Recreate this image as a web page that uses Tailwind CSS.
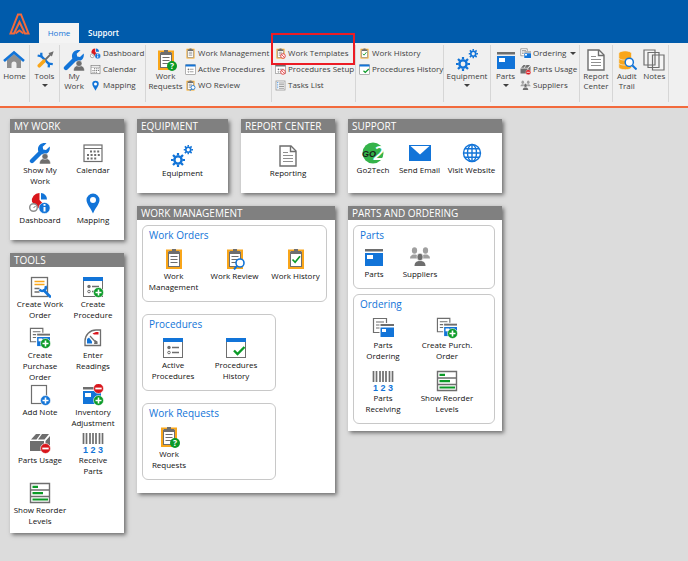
<!DOCTYPE html>
<html lang="en">

<head>
  <meta charset="UTF-8" />
  <meta name="viewport" content="width=device-width, initial-scale=1.0" />
  <title>Home</title>
  <script src="https://cdn.jsdelivr.net/npm/@tailwindcss/browser@4"></script>
</head>

<body class="bg-[#dcdcdc] min-h-screen font-['Segoe_UI','Open_Sans',sans-serif] text-[8px] leading-[11px] text-[#101010]">

  <!-- Icon sprite -->
  <svg class="hidden">
    <symbol id="clipboard" viewBox="0 0 22 22">
      <rect x="4" y="2.500" width="14" height="17.500" fill="#fff" stroke="#f9a61a" stroke-width="2" />
      <rect x="5.500" y="4" width="11" height="14.500" fill="#fff" stroke="#6e6e6e" />
      <path d="M6 3h3V1h4v2h3v3H6z" fill="#6e6e6e" />
    </symbol>
    <symbol id="lines" viewBox="0 0 22 22">
      <path d="M7.500 8.500h7M7.500 11.500h7M7.500 14.500h7" stroke="#6e6e6e" stroke-width="1.200" />
    </symbol>
    <symbol id="plus" viewBox="0 0 22 22">
      <circle cx="16.500" cy="16.500" r="5" fill="currentColor" stroke="#fff" stroke-width=".6" />
      <path d="M16.500 13.500v6M13.500 16.500h6" stroke="#fff" stroke-width="1.600" />
    </symbol>
    <symbol id="minus" viewBox="0 0 22 22">
      <circle cx="16.500" cy="16.500" r="5" fill="#d9161c" stroke="#fff" stroke-width=".6" />
      <path d="M13.300 16.500h6.400" stroke="#fff" stroke-width="1.800" />
    </symbol>
    <symbol id="wrench" viewBox="0 0 22 22">
      <path d="M3 19L12 10" stroke="#1274d8" stroke-width="4.400" stroke-linecap="round" />
      <path d="M17.500 1.300l-3.800 3.500.5 2.800 2.800.5 3.700-3.600c.8 3.500-1.200 7.300-5 7.800-4.500.6-7.200-2.200-6.700-6C9.500 2.500 13.500 0 17.500 1.300z" fill="#1274d8" />
    </symbol>
    <symbol id="gear" viewBox="0 0 14 14">
      <circle cx="7" cy="7" r="3.600" fill="none" stroke="#1274d8" stroke-width="2.400" />
      <path d="M7 0v2.600M7 11.400V14M0 7h2.600M11.400 7H14M2 2l1.900 1.900M10.100 10.100L12 12M12 2l-1.900 1.900M2 12l1.900-1.900" stroke="#1274d8" stroke-width="2.200" />
    </symbol>
    <symbol id="window" viewBox="0 0 22 22">
      <rect x="1.500" y="1.500" width="19" height="19" fill="#fff" stroke="#6e6e6e" />
      <path d="M1 1h20v4H1z" fill="#1274d8" />
    </symbol>
    <symbol id="list" viewBox="0 0 22 22">
      <path d="M10 10.500h7M10 15.500h7" stroke="#6e6e6e" stroke-width="1.300" />
      <circle cx="7" cy="10.500" r="1.700" fill="#6e6e6e" />
      <circle cx="7" cy="15.500" r="1.300" fill="#fff" stroke="#6e6e6e" />
    </symbol>
    <symbol id="block" viewBox="0 0 22 22">
      <circle cx="16" cy="16" r="4.600" fill="#fff" stroke="#e23b3b" stroke-width="1.800" />
      <path d="M13 13l6 6" stroke="#e23b3b" stroke-width="1.600" />
    </symbol>

    <symbol id="i-home" viewBox="0 0 22 22">
      <path d="M4 11l7-6 7 6v8h-4.500v-4a2.500 2.500 0 0 0-5 0v4H4z" fill="#8f8f8f" />
      <path d="M1 12L11 3.500l10 8.500" fill="none" stroke="#1274d8" stroke-width="2.600" />
    </symbol>
    <symbol id="i-tools" viewBox="0 0 22 22">
      <path d="M5 5l12 12" stroke="#1274d8" stroke-width="2.800" />
      <path d="M2 5.500l4.500 1L6.500 2M15.500 20l.5-4.500 4.500.5" fill="none" stroke="#1274d8" stroke-width="2.800" />
      <path d="M19 3l-8 8" stroke="#6e6e6e" stroke-width="2.200" />
      <path d="M9.500 12.500L4 18" stroke="#f9a61a" stroke-width="4.500" stroke-linecap="round" />
      <path d="M17 3l3-1-1 3z" fill="#6e6e6e" stroke="#6e6e6e" stroke-width="2" />
    </symbol>
    <symbol id="i-mywork" viewBox="0 0 22 22">
      <use href="#wrench" />
      <path d="M10.500 22c0-4 2-5.500 5.500-5.500s5.500 1.500 5.500 5.500z" fill="#6e6e6e" stroke="#fff" stroke-width=".5" />
      <circle cx="16" cy="14.500" r="3" fill="#6e6e6e" stroke="#fff" stroke-width=".5" />
    </symbol>
    <symbol id="i-dashboard" viewBox="0 0 22 22">
      <path d="M10.500 8V1A7.500 7.500 0 0 0 3 10l7.500 7 5.500-3.500z" fill="#d9161c" />
      <path d="M12 7.500V1a6.500 6.500 0 0 1 6 6.500z" fill="#1274d8" />
      <circle cx="4.500" cy="15.500" r="3.800" fill="#fff" stroke="#8f8f8f" stroke-width="1.500" />
      <path d="M4.500 16l2-2" stroke="#6e6e6e" />
      <circle cx="15.500" cy="16" r="5.600" fill="#1274d8" stroke="#fff" stroke-width=".6" />
      <path d="M15.500 15v4.500M15.500 12v1.800" stroke="#fff" stroke-width="2" />
    </symbol>
    <symbol id="i-calendar" viewBox="0 0 22 22">
      <rect x="2" y="3" width="18" height="16.500" fill="#fff" stroke="#6e6e6e" stroke-width="1.200" />
      <path d="M2 6.500h18" stroke="#6e6e6e" />
      <path d="M8 9.500h10M5 13h13M5 16.500h10" stroke="#6e6e6e" stroke-width="2" stroke-dasharray="2 1.600" />
    </symbol>
    <symbol id="i-pin" viewBox="0 0 22 22">
      <path d="M11 21.500C9 16.500 4.500 12 4.500 8a6.500 6.500 0 0 1 13 0c0 4-4.500 8.500-6.500 13.500z" fill="#1274d8" />
      <circle cx="11" cy="8" r="3" fill="#fff" />
    </symbol>
    <symbol id="i-work" viewBox="0 0 22 22">
      <use href="#clipboard" /><use href="#lines" />
    </symbol>
    <symbol id="i-request" viewBox="0 0 22 22">
      <use href="#clipboard" /><use href="#lines" />
      <circle cx="17" cy="17" r="5" fill="#0a9a26" />
      <text x="17" y="20" font-size="8.500" font-weight="700" fill="#fff" text-anchor="middle">?</text>
    </symbol>
    <symbol id="i-review" viewBox="0 0 22 22">
      <use href="#clipboard" /><use href="#lines" />
      <circle cx="16" cy="15" r="4" fill="#fff" stroke="#1274d8" stroke-width="1.600" />
      <path d="M13.300 17.700L10 21.500" stroke="#1274d8" stroke-width="2" />
    </symbol>
    <symbol id="i-history" viewBox="0 0 22 22">
      <use href="#clipboard" />
      <path d="M7.500 11.500l2.600 2.800 4.900-6" fill="none" stroke="#0a9a26" stroke-width="1.700" />
    </symbol>
    <symbol id="i-template" viewBox="0 0 22 22">
      <use href="#clipboard" /><use href="#lines" /><use href="#block" />
    </symbol>
    <symbol id="i-procedure" viewBox="0 0 22 22">
      <use href="#window" /><use href="#list" />
    </symbol>
    <symbol id="i-prochistory" viewBox="0 0 22 22">
      <use href="#window" />
      <path d="M9 13.500l3.500 3.500 7-7" fill="none" stroke="#0a9a26" stroke-width="2.400" />
    </symbol>
    <symbol id="i-procsetup" viewBox="0 0 22 22">
      <rect x="1.500" y="2.500" width="19" height="17" fill="#fff" stroke="#6e6e6e" />
      <path d="M1 2h20v3H1z" fill="#6e6e6e" />
      <use href="#list" /><use href="#block" />
    </symbol>
    <symbol id="i-newprocedure" viewBox="0 0 22 22">
      <use href="#window" /><use href="#list" /><use href="#plus" class="text-[#0a9a26]" />
    </symbol>
    <symbol id="i-tasks" viewBox="0 0 22 22">
      <rect x="2" y="2" width="18" height="18" fill="#fff" stroke="#8f8f8f" stroke-width="1.500" />
      <path d="M8 6h10M8 9.500h10M8 13h10M8 16.500h10" stroke="#6e6e6e" stroke-width="1.400" />
      <path d="M5.500 4v14" stroke="#1274d8" stroke-width="1.600" stroke-dasharray="2 1.500" />
    </symbol>
    <symbol id="i-gears" viewBox="0 0 22 22">
      <use href="#gear" x="0" y="8" width="14" height="14" />
      <use href="#gear" x="12.500" y="0" width="9.500" height="9.500" />
    </symbol>
    <symbol id="i-parts" viewBox="0 0 22 22">
      <path d="M2 3h18v2.500H2z" fill="#6e6e6e" />
      <path d="M2 7h18v13H2z" fill="#1274d8" />
      <path d="M4 9h6v4H4z" fill="#fff" />
    </symbol>
    <symbol id="i-ordering" viewBox="0 0 22 22">
      <path d="M1.500 1.500h13v14h-13z" fill="#fff" stroke="#6e6e6e" stroke-width="1.200" />
      <path d="M4 5h8M4 8h4M4 11h4" stroke="#6e6e6e" stroke-width="1.200" />
      <path d="M7.500 6H22v15H7.500z" fill="#fff" />
      <path d="M8.500 7H22v2H8.500z" fill="#6e6e6e" />
      <path d="M8.500 10.500H22V20H8.500z" fill="#1274d8" />
      <path d="M10 12h4v3h-4z" fill="#fff" />
    </symbol>
    <symbol id="i-neworder" viewBox="0 0 22 22">
      <use href="#i-ordering" width="21" height="21" /><use href="#plus" class="text-[#0a9a26]" />
    </symbol>
    <symbol id="i-usage" viewBox="0 0 22 22">
      <path d="M1 9h14v10H1zM2 7.500L7 2h4.500L7.500 7.500zM9 7.500L13 2h7l-4.500 5.500zM16.500 9L21 4v9l-4.500 5z" fill="#6e6e6e" />
      <use href="#minus" />
    </symbol>
    <symbol id="i-suppliers" viewBox="0 0 22 22">
      <g fill="#a0a0a0">
        <ellipse cx="5.500" cy="4.500" rx="2.600" ry="3.300" />
        <ellipse cx="16.500" cy="4.500" rx="2.600" ry="3.300" />
        <path d="M1 12.500c0-3 2-4 4.500-4s3.500 1 3.500 4zM13 12.500c0-3 1-4 3.500-4s4.500 1 4.500 4z" />
      </g>
      <g fill="#6e6e6e">
        <path d="M5.500 20c0-4 2.500-5 5.500-5s5.500 1 5.500 5z" />
        <ellipse cx="11" cy="11" rx="3" ry="3.800" stroke="#fff" stroke-width=".6" />
      </g>
    </symbol>
    <symbol id="i-report" viewBox="0 0 22 22">
      <path d="M3 1h11l5 5v15H3z" fill="#fff" stroke="#6e6e6e" stroke-width="1.400" />
      <path d="M13.500 1v5.500H19" fill="none" stroke="#6e6e6e" stroke-width="1.400" />
      <path d="M6 7.500h5M6 10.500h10M6 13.500h10M6 16.500h10" stroke="#8f8f8f" />
    </symbol>
    <symbol id="i-audit" viewBox="0 0 22 22">
      <g fill="#f9a61a" stroke="#f0f0f0" stroke-width=".7">
        <path d="M2 15v4c0 3.500 14 3.500 14 0v-4z" />
        <path d="M2 9.500v4.500c0 3.500 14 3.500 14 0V9.500z" />
        <path d="M2 4v4.500c0 3.500 14 3.500 14 0V4c0-4-14-4-14 0z" />
      </g>
      <circle cx="13.500" cy="13.500" r="4.500" fill="#fff" stroke="#1274d8" stroke-width="1.600" />
      <path d="M17 17l4.500 4.500" stroke="#1274d8" stroke-width="2.200" />
    </symbol>
    <symbol id="i-notes" viewBox="0 0 22 22">
      <g fill="#f4f4f4" stroke="#6e6e6e" stroke-width="1.200">
        <path d="M1 1h11v15H1zM5 3.500h11v15H5zM9.500 6h11.500v15H9.500z" />
      </g>
    </symbol>
    <symbol id="i-neworkorder" viewBox="0 0 22 22">
      <rect x="2.500" y="1.500" width="16" height="19" fill="#fff" stroke="#6e6e6e" stroke-width="1.300" />
      <path d="M5.500 5.500h10M5.500 8.500h10" stroke="#f9a61a" stroke-width="1.500" />
      <path d="M5.500 12.500h5M5.500 16h5" stroke="#6e6e6e" stroke-width="1.300" />
      <path d="M15 14.500l6 6" stroke="#1274d8" stroke-width="2.600" stroke-linecap="round" />
      <path d="M10.500 13.500a3.500 3.500 0 0 0 6-3.500" fill="none" stroke="#1274d8" stroke-width="2.400" />
    </symbol>
    <symbol id="i-readings" viewBox="0 0 22 22">
      <path d="M3 18.500V14A11 11 0 0 1 14 3h4.500v15.500z" fill="#fff" stroke="#6e6e6e" stroke-width="1.300" />
      <path d="M10.500 6.500l3.500-1.500h2.500v2.500H12z" fill="#d9161c" />
      <path d="M5 12l2-1.500 3 4v2H5z" fill="#1274d8" />
      <path d="M8 9l7 7.500" stroke="#6e6e6e" stroke-width="1.200" />
      <path d="M13 13l2.500 1.500v2.500H12z" fill="#6e6e6e" />
    </symbol>
    <symbol id="i-note" viewBox="0 0 22 22">
      <rect x="2.500" y="1.500" width="15" height="18" fill="#fff" stroke="#6e6e6e" stroke-width="1.200" />
      <use href="#plus" class="text-[#1274d8]" />
    </symbol>
    <symbol id="i-inventory" viewBox="0 0 22 22">
      <use href="#i-parts" x="-1" y="0" />
      <use href="#plus" class="text-[#0a9a26]" />
      <use href="#minus" y="-12" />
    </symbol>
    <symbol id="i-barcode" viewBox="0 0 22 22">
      <path d="M1.500 1v11M4.500 1v11M8 1v11M11 1v11M14 1v11M17.500 1v11M20.500 1v11" stroke="#6e6e6e" stroke-width="1.700" />
      <g font-family="Liberation Sans, sans-serif" font-size="9" font-weight="700" fill="#1274d8" text-anchor="middle">
        <text x="3.500" y="21">1</text><text x="11" y="21">2</text><text x="18.500" y="21">3</text>
      </g>
    </symbol>
    <symbol id="i-levels" viewBox="0 0 22 22">
      <path d="M1.500 1.500h19v19h-19zM1.500 8h19M1.500 14.500h19" fill="#fff" stroke="#6e6e6e" stroke-width="1.400" />
      <path d="M3.500 4.800H9M3.500 11.200H14M3.500 17.500h15.500" stroke="#0a9a26" stroke-width="2.200" />
    </symbol>
    <symbol id="i-go2" viewBox="0 0 22 22">
      <circle cx="11" cy="11" r="10.500" fill="#35b34a" />
      <text x="11.500" y="18" font-family="Open Sans, sans-serif" font-size="19" font-weight="600" font-style="italic" fill="#fff">2</text>
      <text x="0" y="14.500" font-family="Liberation Sans, sans-serif" font-size="9" font-weight="700" font-style="italic" fill="#1e1e1e">GO</text>
    </symbol>
    <symbol id="i-mail" viewBox="0 0 22 22">
      <path d="M0 3h22v16H0z" fill="#1274d8" />
      <path d="M1.500 4l9.500 8.500L20.500 4z" fill="#fff" />
    </symbol>
    <symbol id="i-globe" viewBox="0 0 22 22">
      <g fill="none" stroke="#1274d8" stroke-width="1.400">
        <circle cx="11" cy="11" r="8.500" />
        <ellipse cx="11" cy="11" rx="4.500" ry="8.500" />
        <path d="M11 2.500v17M2.500 11h17M4 6.800h14M4 15.200h14" />
      </g>
    </symbol>
  </svg>

  <!-- Title bar with tabs -->
  <header class="bg-[#005bab] h-[43px] flex items-end">
    <svg class="w-[21px] h-[22px] ml-[9px] mb-2" viewBox="0 0 21 22" fill="none" stroke="#f26a3d" stroke-width="2">
      <path d="M5 20.500L10.500 9l5.500 11.500h3.500L12 1.500H9L1.500 20.500z" />
      <path d="M6.500 20.500l4-3 4 3" />
    </svg>
    <nav class="flex ml-[9px] leading-[20px]">
      <a href="#" class="bg-[#f4f4f4] text-[#1274d8] w-10 text-center">Home</a>
      <a href="#" class="text-white font-semibold px-[9px]">Support</a>
    </nav>
  </header>

  <!-- Ribbon -->
  <div class="bg-[#f0f0f0] h-[65px] border-b-2 border-[#f26a3d] pt-[2px] pb-1 flex leading-[10px] text-[#404040] [&>div]:shrink-0 [&>div]:border-r [&>div]:border-[#d6d6d6] [&_button]:whitespace-nowrap">
    <div class="w-[30px] flex justify-center">
      <button class="flex flex-col items-center self-start pt-1"><svg class="size-[22px]"><use href="#i-home" /></svg>Home</button>
    </div>
    <div class="w-[30px] flex justify-center">
      <button class="flex flex-col items-center self-start pt-1"><svg class="size-[22px] p-[2px]"><use href="#i-tools" /></svg>Tools<span class="mt-[3px] border-x-[3px] border-t-[3px] border-x-transparent border-t-[#404040]"></span></button>
    </div>
    <div class="w-[86px] flex">
      <button class="w-7 flex flex-col items-center self-start pt-1"><svg class="size-[22px]"><use href="#i-mywork" /></svg>My<br>Work</button>
      <div class="pl-[2px]">
        <button class="h-4 flex items-center gap-[2px]"><svg class="size-[11px]"><use href="#i-dashboard" /></svg>Dashboard</button>
        <button class="h-4 flex items-center gap-[2px]"><svg class="size-[11px]"><use href="#i-calendar" /></svg>Calendar</button>
        <button class="h-4 flex items-center gap-[2px]"><svg class="size-[11px]"><use href="#i-pin" /></svg>Mapping</button>
      </div>
    </div>
    <div class="w-[126px] flex">
      <button class="w-[39px] flex flex-col items-center self-start pt-1"><svg class="size-[22px]"><use href="#i-request" /></svg>Work<br>Requests</button>
      <div>
        <button class="h-4 flex items-center gap-[2px]"><svg class="size-[11px]"><use href="#i-work" /></svg>Work Management</button>
        <button class="h-4 flex items-center gap-[2px]"><svg class="size-[11px]"><use href="#i-procedure" /></svg>Active Procedures</button>
        <button class="h-4 flex items-center gap-[2px]"><svg class="size-[11px]"><use href="#i-review" /></svg>WO Review</button>
      </div>
    </div>
    <div class="w-[84px] pl-[3px]">
      <button class="relative h-4 flex items-center gap-[2px]"><svg class="size-[11px]"><use href="#i-template" /></svg>Work Templates
        <!-- callout round the templates button -->
        <span class="absolute -left-1 -top-[12px] w-[84px] h-[32px] border-2 border-[#ec1c24]"></span>
      </button>
      <button class="h-4 flex items-center gap-[2px]"><svg class="size-[11px]"><use href="#i-procsetup" /></svg>Procedures Setup</button>
      <button class="h-4 flex items-center gap-[2px]"><svg class="size-[11px]"><use href="#i-tasks" /></svg>Tasks List</button>
    </div>
    <div class="w-[88px] pl-[3px]">
      <button class="h-4 flex items-center gap-[2px]"><svg class="size-[11px]"><use href="#i-history" /></svg>Work History</button>
      <button class="h-4 flex items-center gap-[2px]"><svg class="size-[11px]"><use href="#i-prochistory" /></svg>Procedures History</button>
    </div>
    <div class="w-[47px] flex justify-center">
      <button class="flex flex-col items-center self-start pt-1"><svg class="size-[22px]"><use href="#i-gears" /></svg>Equipment<span class="mt-[3px] border-x-[3px] border-t-[3px] border-x-transparent border-t-[#404040]"></span></button>
    </div>
    <div class="w-[89px] flex">
      <button class="w-[29px] flex flex-col items-center self-start pt-1"><svg class="size-[22px]"><use href="#i-parts" /></svg>Parts<span class="mt-[3px] border-x-[3px] border-t-[3px] border-x-transparent border-t-[#404040]"></span></button>
      <div>
        <button class="h-4 flex items-center gap-[2px]"><svg class="size-[11px]"><use href="#i-ordering" /></svg>Ordering<span class="ml-[2px] border-x-[3px] border-t-[3px] border-x-transparent border-t-[#404040]"></span></button>
        <button class="h-4 flex items-center gap-[2px]"><svg class="size-[11px]"><use href="#i-usage" /></svg>Parts Usage</button>
        <button class="h-4 flex items-center gap-[2px]"><svg class="size-[11px]"><use href="#i-suppliers" /></svg>Suppliers</button>
      </div>
    </div>
    <div class="w-[33px] flex justify-center">
      <button class="flex flex-col items-center self-start pt-1"><svg class="size-[22px]"><use href="#i-report" /></svg>Report<br>Center</button>
    </div>
    <div class="w-[56px] flex justify-around">
      <button class="flex flex-col items-center self-start pt-1"><svg class="size-[22px] p-px"><use href="#i-audit" /></svg>Audit<br>Trail</button>
      <button class="flex flex-col items-center self-start pt-1"><svg class="size-[22px]"><use href="#i-notes" /></svg>Notes</button>
    </div>
  </div>

  <!-- Panels -->
  <main class="flex items-start gap-[13px] px-[10px] pt-[11px] pb-7 [&_section]:bg-white [&_section]:shadow-[2px_2px_4px_rgba(0,0,0,0.5)] [&_h2]:bg-[#808080] [&_h2]:text-white [&_h2]:text-[10px] [&_h2]:leading-[14px] [&_h2]:pl-1 [&_h2]:whitespace-nowrap [&_h3]:text-[#1274d8] [&_h3]:text-[10px] [&_h3]:leading-[14px] [&_h3]:pl-[6px] [&_button]:flex [&_button]:flex-col [&_button]:items-center [&_button]:self-start [&_button]:whitespace-nowrap">

    <div class="w-[114px] flex flex-col gap-[13px]">
      <section>
        <h2>MY WORK</h2>
        <div class="grid grid-cols-[60px_46px] grid-rows-[50px_auto] pt-[9px] pb-[15px]">
          <button><svg class="size-[22px]"><use href="#i-mywork" /></svg>Show My<br>Work</button>
          <button><svg class="size-[22px]"><use href="#i-calendar" /></svg>Calendar</button>
          <button><svg class="size-[22px]"><use href="#i-dashboard" /></svg>Dashboard</button>
          <button><svg class="size-[22px]"><use href="#i-pin" /></svg>Mapping</button>
        </div>
      </section>

      <section>
        <h2>TOOLS</h2>
        <div class="grid grid-cols-[60px_46px] grid-rows-[51px_57px_48px_50px_auto] pt-[9px] pb-[7px]">
          <button><svg class="size-[22px]"><use href="#i-neworkorder" /></svg>Create Work<br>Order</button>
          <button><svg class="size-[22px]"><use href="#i-newprocedure" /></svg>Create<br>Procedure</button>
          <button><svg class="size-[22px]"><use href="#i-neworder" /></svg>Create<br>Purchase<br>Order</button>
          <button><svg class="size-[22px]"><use href="#i-readings" /></svg>Enter<br>Readings</button>
          <button><svg class="size-[22px]"><use href="#i-note" /></svg>Add Note</button>
          <button><svg class="size-[22px]"><use href="#i-inventory" /></svg>Inventory<br>Adjustment</button>
          <button><svg class="size-[22px]"><use href="#i-usage" /></svg>Parts Usage</button>
          <button><svg class="size-[22px]"><use href="#i-barcode" /></svg>Receive<br>Parts</button>
          <button><svg class="size-[22px]"><use href="#i-levels" /></svg>Show Reorder<br>Levels</button>
        </div>
      </section>
    </div>

    <div class="w-[198px] flex flex-col gap-[13px]">
      <div class="flex gap-[13px] h-[74px]">
        <section class="w-[91px]">
          <h2>EQUIPMENT</h2>
          <div class="flex justify-center pt-3">
            <button><svg class="size-[22px]"><use href="#i-gears" /></svg>Equipment</button>
          </div>
        </section>
        <section class="w-[94px]">
          <h2>REPORT CENTER</h2>
          <div class="flex justify-center pt-3">
            <button><svg class="size-[22px]"><use href="#i-report" /></svg>Reporting</button>
          </div>
        </section>
      </div>

      <section>
        <h2>WORK MANAGEMENT</h2>
        <div class="flex flex-col items-start gap-3 px-[5px] pt-[5px] pb-[13px] [&>div]:border [&>div]:border-[#c8c8c8] [&>div]:rounded-md [&>div]:h-[77px] [&>div]:pt-[2px]">
          <div class="w-[185px]">
            <h3>Work Orders</h3>
            <div class="grid grid-cols-3 pt-[6px]">
              <button><svg class="size-[22px]"><use href="#i-work" /></svg>Work<br>Management</button>
              <button><svg class="size-[22px]"><use href="#i-review" /></svg>Work Review</button>
              <button><svg class="size-[22px]"><use href="#i-history" /></svg>Work History</button>
            </div>
          </div>
          <div class="w-[134px]">
            <h3>Procedures</h3>
            <div class="grid grid-cols-[60px_66px] pt-[6px]">
              <button><svg class="size-[22px]"><use href="#i-procedure" /></svg>Active<br>Procedures</button>
              <button><svg class="size-[22px]"><use href="#i-prochistory" /></svg>Procedures<br>History</button>
            </div>
          </div>
          <div class="w-[134px]">
            <h3>Work Requests</h3>
            <div class="grid grid-cols-[52px] pt-[6px]">
              <button><svg class="size-[22px]"><use href="#i-request" /></svg>Work<br>Requests</button>
            </div>
          </div>
        </div>
      </section>
    </div>

    <div class="w-[154px] flex flex-col gap-[13px]">
      <section class="h-[74px]">
        <h2>SUPPORT</h2>
        <div class="grid grid-cols-[50px_43px_61px] pt-[9px]">
          <button><svg class="size-[22px]"><use href="#i-go2" /></svg>Go2Tech</button>
          <button><svg class="size-[22px]"><use href="#i-mail" /></svg>Send Email</button>
          <button><svg class="size-[22px]"><use href="#i-globe" /></svg>Visit Website</button>
        </div>
      </section>

      <section>
        <h2>PARTS AND ORDERING</h2>
        <div class="flex flex-col gap-[5px] pl-[5px] pr-[7px] pt-[5px] pb-[7px] [&>div]:border [&>div]:border-[#c8c8c8] [&>div]:rounded-md [&>div]:pt-[2px]">
          <div class="h-[64px]">
            <h3>Parts</h3>
            <div class="grid grid-cols-[40px_52px] pt-1">
              <button><svg class="size-[22px]"><use href="#i-parts" /></svg>Parts</button>
              <button><svg class="size-[22px]"><use href="#i-suppliers" /></svg>Suppliers</button>
            </div>
          </div>
          <div class="h-[130px]">
            <h3>Ordering</h3>
            <div class="grid grid-cols-[58px_70px] grid-rows-[53px_auto] pt-[6px]">
              <button><svg class="size-[22px]"><use href="#i-ordering" /></svg>Parts<br>Ordering</button>
              <button><svg class="size-[22px]"><use href="#i-neworder" /></svg>Create Purch.<br>Order</button>
              <button><svg class="size-[22px]"><use href="#i-barcode" /></svg>Parts<br>Receiving</button>
              <button><svg class="size-[22px]"><use href="#i-levels" /></svg>Show Reorder<br>Levels</button>
            </div>
          </div>
        </div>
      </section>
    </div>
  </main>
</body>

</html>
